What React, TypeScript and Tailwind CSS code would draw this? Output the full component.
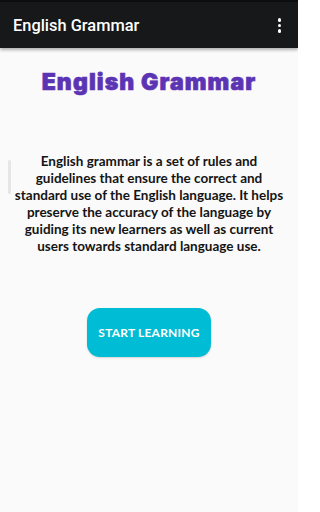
import React from "react";

export default function App() {
  return (
    <div className="w-[298px] h-[512px] bg-[#fafafa] flex flex-col overflow-hidden relative">
      <div className="h-[2px] bg-[#0c0e0f]" />
      <div className="h-[46px] bg-[#161819] flex items-center justify-between pl-[13px] pr-[17px] pt-[3px] shadow-[0_2px_3px_rgba(0,0,0,0.3)] z-10">
        <span className="text-white text-[16.4px] font-medium font-['Roboto',sans-serif]">English Grammar</span>
        <div className="flex flex-col gap-[2px] items-center mb-[2px]">
          <span className="w-[3.5px] h-[3.5px] rounded-full bg-white" />
          <span className="w-[3.5px] h-[3.5px] rounded-full bg-white" />
          <span className="w-[3.5px] h-[3.5px] rounded-full bg-white" />
        </div>
      </div>
      <div className="flex-1 flex flex-col items-center relative">
        <div className="absolute left-[8px] top-[112px] w-[3px] h-[34px] bg-[#e6e6e6] rounded-sm" />
        <h1 className="mt-[19px] text-[#5b34b4] text-[23px] font-black font-['Inter',sans-serif] tracking-[1.1px] leading-[30px] [-webkit-text-stroke:0.7px_#5b34b4]">
          English Grammar
        </h1>
        <p className="mt-[56px] px-[12px] text-center text-[#141414] text-[13.5px] leading-[17px] font-bold font-['Lato',sans-serif]">
          English grammar is a set of rules and guidelines that ensure the correct and standard use of the English language. It helps preserve the accuracy of the language by guiding its new learners as well as current users towards standard language use.
        </p>
        <button className="mt-[53px] w-[124px] h-[49px] rounded-[13px] bg-[#00bcd4] text-white text-[12px] font-bold font-['Lato',sans-serif] tracking-[0.2px] shadow-[0_1px_2px_rgba(0,0,0,0.15)]">
          START LEARNING
        </button>
      </div>
    </div>
  );
}
